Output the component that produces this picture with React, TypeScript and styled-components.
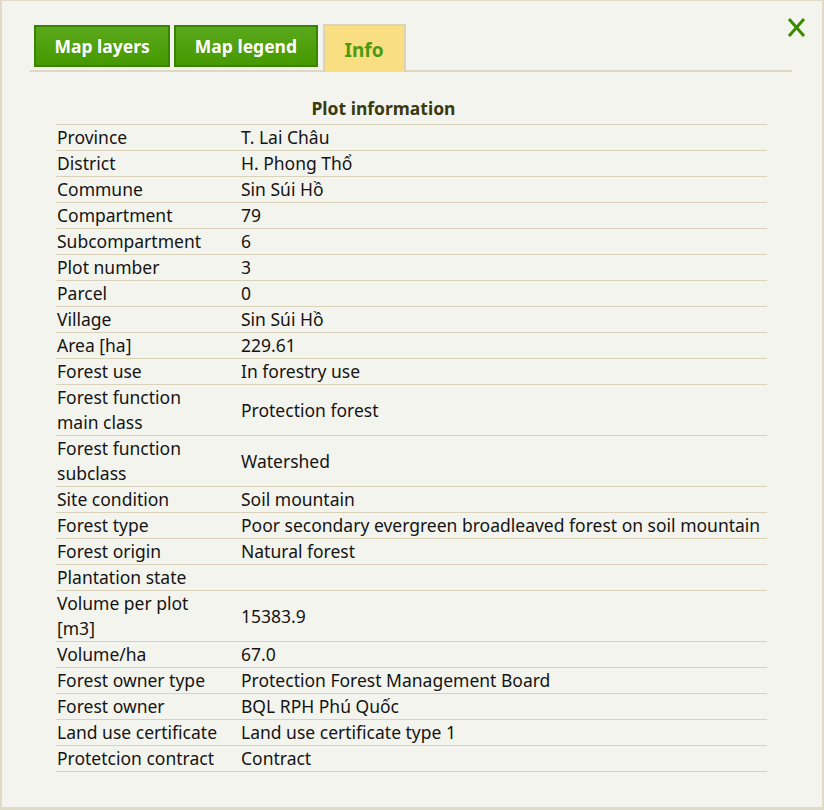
import React, { ReactElement } from 'react';
import styled, { createGlobalStyle } from 'styled-components';

const GlobalStyle = createGlobalStyle`
  body {
    margin: 0;
    font-family: "Noto Sans", "Open Sans", sans-serif;
  }
`;

const Panel = styled.div`
  box-sizing: border-box;
  width: 824px;
  height: 810px;
  position: relative;
  background-color: #f4f4ee;
  border-style: solid;
  border-color: #e0dac8;
  border-width: 1px 2px 3px 2px;
  padding: 23px 30px 0 28px;
`;

const CloseButton = styled.button`
  position: absolute;
  top: 14px;
  right: 14px;
  width: 24px;
  height: 24px;
  padding: 0;
  border: none;
  background: transparent;
  cursor: pointer;
`;

const TabBar = styled.div`
  display: flex;
  gap: 4px;
  padding-left: 4px;
  border-bottom: 2px solid #ded8c4;
  height: 46px;
`;

const Tab = styled.div<{ $active?: boolean }>`
  box-sizing: border-box;
  display: flex;
  align-items: center;
  justify-content: center;
  font-weight: 700;
  cursor: pointer;
  ${({ $active }) =>
    $active
      ? `
    height: 48px;
    margin-left: 1px;
    padding: 2px 20px 0;
    background: #f9de82;
    border: 2px solid #ddd4b8;
    border-bottom: none;
    color: #4b9a10;
    font-size: 19px;
  `
      : `
    height: 42px;
    margin-top: 1px;
    padding: 0 18.5px;
    background: linear-gradient(#5aa81c, #469a00);
    border: 2px solid #3b8200;
    color: #ffffff;
    font-size: 17.5px;
  `}
`;

const Content = styled.div`
  padding: 21px 0 0 26px;
`;

const Title = styled.div`
  text-align: center;
  width: 711px;
  padding-right: 56px;
  box-sizing: border-box;
  font-size: 17.5px;
  font-weight: 700;
  color: #3a3a10;
  height: 31px;
  line-height: 30px;
`;

const InfoTable = styled.table`
  width: 711px;
  border-collapse: collapse;
  border-top: 1px solid #d9d2b9;
  font-size: 17.5px;
  color: #141414;
`;

const Row = styled.tr`
  border-bottom: 1px solid #d9d2b9;
`;

const Label = styled.td`
  width: 166px;
  padding: 0 18px 0 1px;
  line-height: 25px;
  vertical-align: middle;
`;

const Value = styled.td`
  padding: 0;
  line-height: 25px;
  vertical-align: middle;
`;

const rows: [string, string][] = [
  ['Province', 'T. Lai Châu'],
  ['District', 'H. Phong Thổ'],
  ['Commune', 'Sin Súi Hồ'],
  ['Compartment', '79'],
  ['Subcompartment', '6'],
  ['Plot number', '3'],
  ['Parcel', '0'],
  ['Village', 'Sin Súi Hồ'],
  ['Area [ha]', '229.61'],
  ['Forest use', 'In forestry use'],
  ['Forest function main class', 'Protection forest'],
  ['Forest function subclass', 'Watershed'],
  ['Site condition', 'Soil mountain'],
  ['Forest type', 'Poor secondary evergreen broadleaved forest on soil mountain'],
  ['Forest origin', 'Natural forest'],
  ['Plantation state', ''],
  ['Volume per plot [m3]', '15383.9'],
  ['Volume/ha', '67.0'],
  ['Forest owner type', 'Protection Forest Management Board'],
  ['Forest owner', 'BQL RPH Phú Quốc'],
  ['Land use certificate', 'Land use certificate type 1'],
  ['Protetcion contract', 'Contract'],
];

function App(): ReactElement {
  return (
    <>
      <GlobalStyle />
      <Panel>
        <CloseButton aria-label="Close">
          <svg width="24" height="24" viewBox="0 0 24 24">
            <path d="M5 4 L20 21 M20 4 L5 21" stroke="#3a8a00" strokeWidth="3" fill="none" />
          </svg>
        </CloseButton>
        <TabBar>
          <Tab>Map layers</Tab>
          <Tab>Map legend</Tab>
          <Tab $active>Info</Tab>
        </TabBar>
        <Content>
          <Title>Plot information</Title>
          <InfoTable>
            <tbody>
              {rows.map(([label, value]) => (
                <Row key={label}>
                  <Label>{label}</Label>
                  <Value>{value}</Value>
                </Row>
              ))}
            </tbody>
          </InfoTable>
        </Content>
      </Panel>
    </>
  );
}

export default App;
